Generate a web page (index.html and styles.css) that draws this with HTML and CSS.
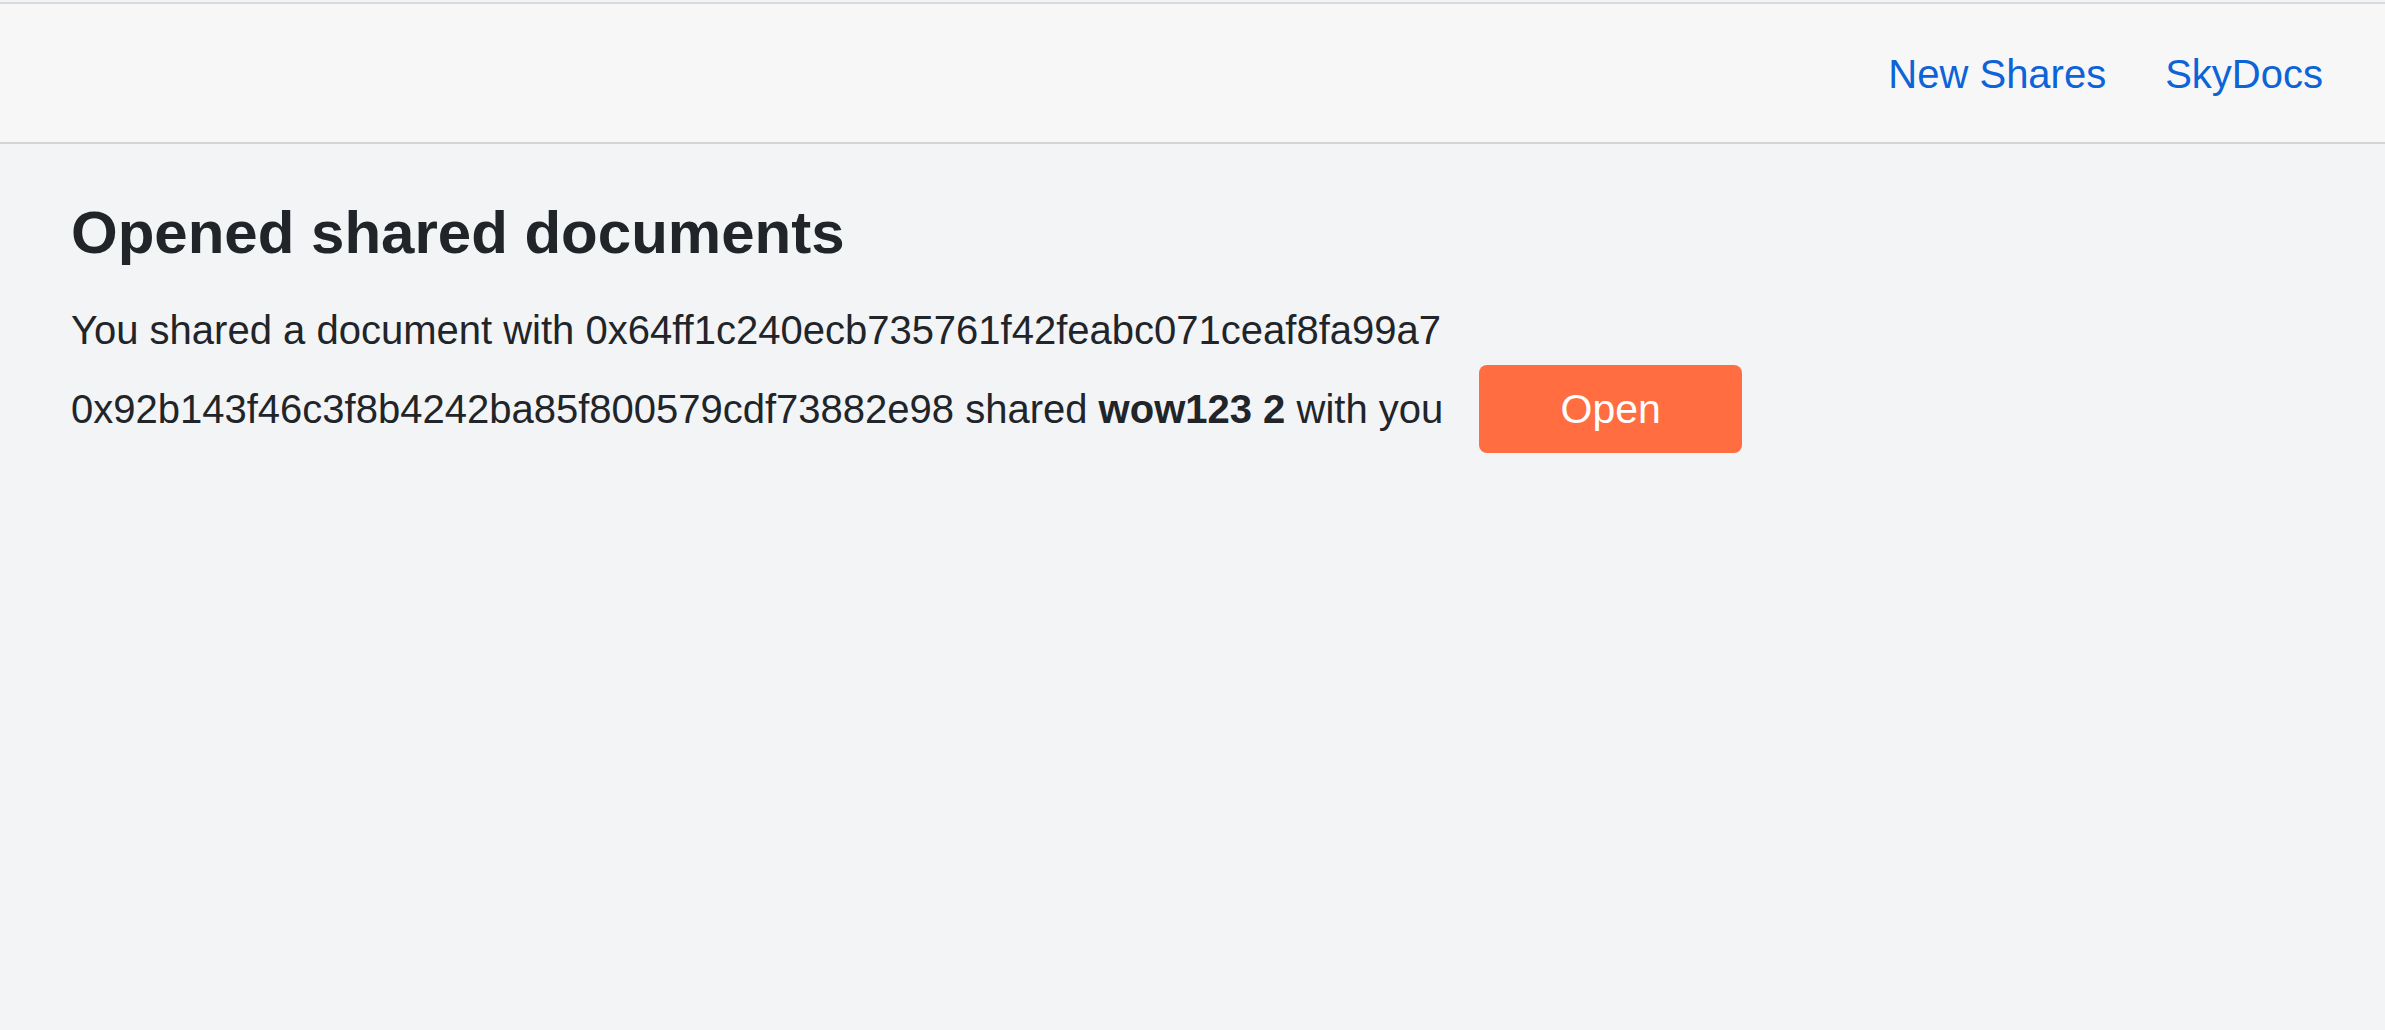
FILE: index.html
```html
<!DOCTYPE html>
<html lang="en">
<head>
<meta charset="utf-8">
<title>Shared documents</title>
<link rel="stylesheet" href="styles.css">
</head>
<body>
<header class="topbar">
  <nav class="nav">
    <a class="nav-link" href="#">New Shares</a>
    <a class="nav-link" href="#">SkyDocs</a>
  </nav>
</header>
<main class="content">
  <h1 class="title">Opened shared documents</h1>
  <p class="share-line">You shared a document with 0x64ff1c240ecb735761f42feabc071ceaf8fa99a7</p>
  <div class="share-row">
    <span class="share-text">0x92b143f46c3f8b4242ba85f800579cdf73882e98 shared <strong>wow123 2</strong> with you</span>
    <button class="open-btn" type="button">Open</button>
  </div>
</main>
</body>
</html>
```

FILE: styles.css
```css
html, body {
  margin: 0;
  padding: 0;
}
body {
  background: #f3f4f6;
  font-family: "Liberation Sans", Arial, sans-serif;
  color: #212529;
  padding-top: 2px;
  min-height: 1028px;
}
.topbar {
  background: #f7f7f7;
  border-top: 2px solid #d6dadd;
  border-bottom: 2px solid #d4d4d4;
  display: flex;
  justify-content: flex-end;
  align-items: flex-start;
  padding: 40px 62px 0 0;
  box-sizing: border-box;
  height: 142px;
}
.nav {
  display: flex;
  gap: 59px;
}
.nav-link {
  color: #0d63d8;
  text-decoration: none;
  font-size: 40px;
  line-height: 60px;
}
.content {
  padding: 53px 71px 0 71px;
}
.title {
  margin: 0;
  font-size: 60px;
  line-height: 72px;
  font-weight: 700;
}
.share-line {
  margin: 31px 0 0 0;
  font-size: 40px;
  line-height: 60px;
}
.share-row {
  margin-top: 5px;
  display: flex;
  align-items: center;
  gap: 36px;
  font-size: 40px;
  line-height: 60px;
}
.share-text strong {
  font-weight: 700;
}
.open-btn {
  width: 263px;
  height: 88px;
  border: 0;
  border-radius: 8px;
  background: #ff6d41;
  color: #ffffff;
  font-family: "Liberation Sans", Arial, sans-serif;
  font-size: 41px;
  padding: 0;
  cursor: pointer;
}
```
